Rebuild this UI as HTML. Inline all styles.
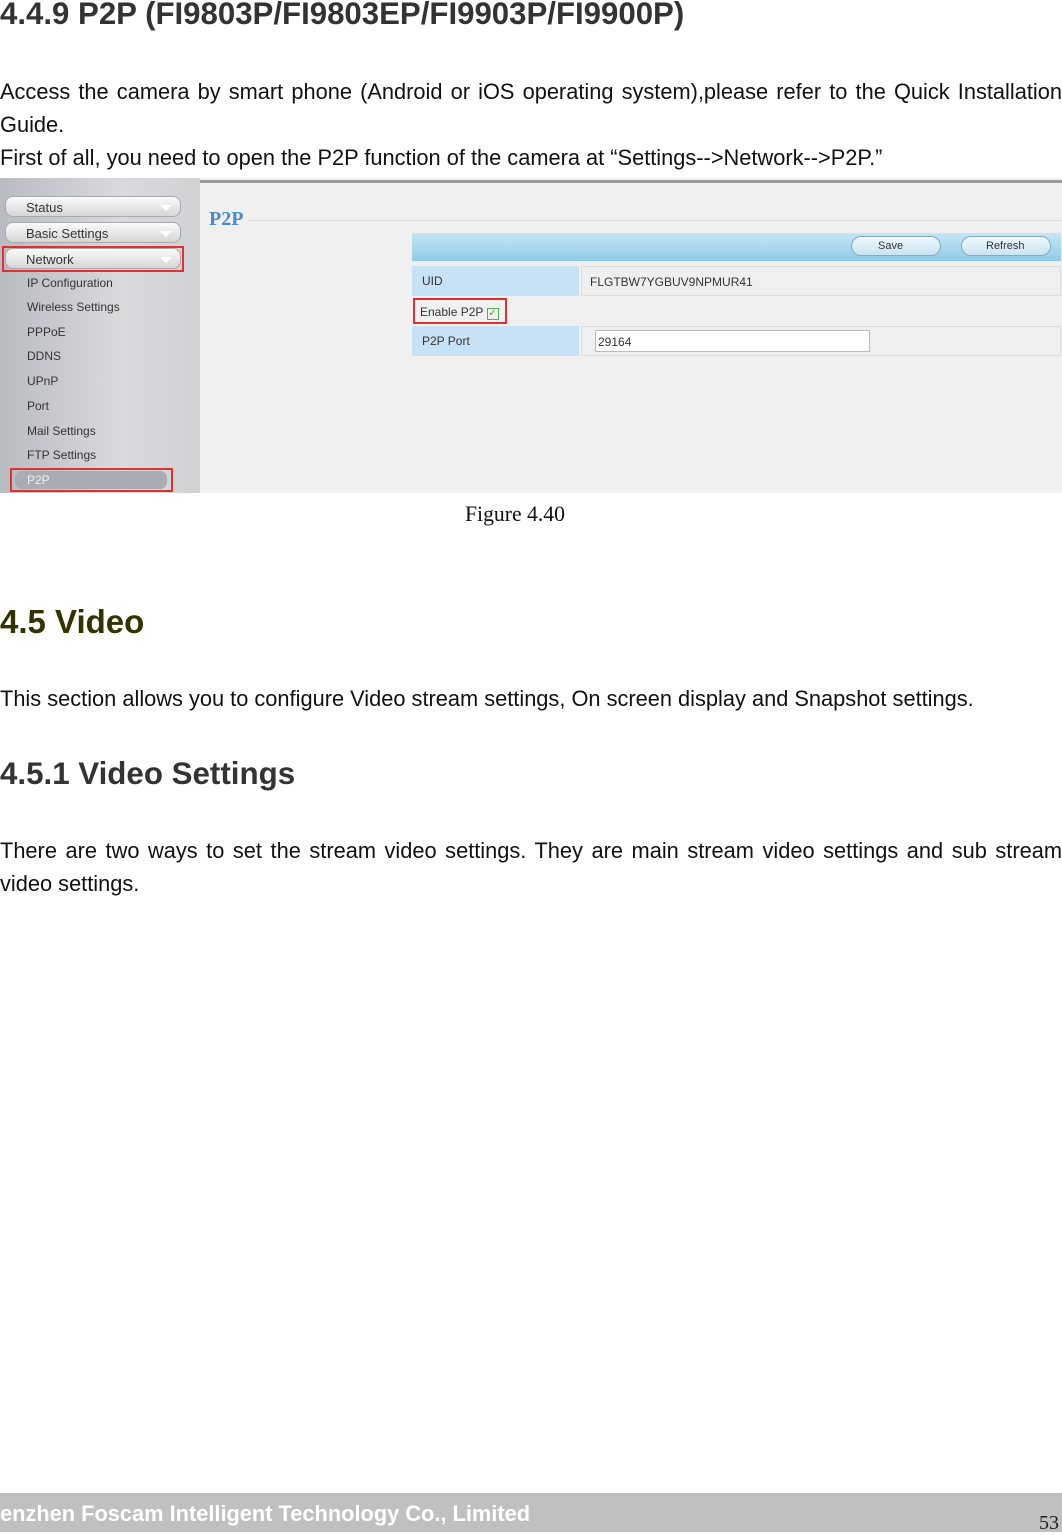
<!DOCTYPE html>
<html><head><meta charset="utf-8"><style>
*{margin:0;padding:0;box-sizing:border-box}
body{width:1062px;height:1532px;position:relative;background:#fff;font-family:"Liberation Sans",sans-serif;color:#111;overflow:hidden}
.a{position:absolute;white-space:nowrap}
.fig{position:absolute;left:0;top:178px;width:1062px;height:315px;background:#f0f0f0;overflow:hidden}
.side{position:absolute;left:0;top:0;width:200px;height:315px;background:linear-gradient(90deg,#b8bbc0,#d8dadd 60%,#cfd1d4)}
.btn{position:absolute;left:5px;width:176px;height:21px;border-radius:8px;background:linear-gradient(#fafafa,#d6d6d6);border:1px solid #aaa;font-size:13px;color:#333;padding:3px 0 0 20px}
.btn:after{content:"";position:absolute;right:8px;top:8px;border:6px solid transparent;border-top:6px solid #fff}
.it{position:absolute;left:27px;font-size:12px;color:#333}
.red{position:absolute;border:2px solid #e03030}
.row{position:absolute;left:412px;width:649px;height:30px}
.lab{position:absolute;left:0;top:0;width:167px;height:100%;background:#c6e2f4;font-size:12px;color:#333;padding:8px 0 0 10px}
.val{position:absolute;left:169px;top:0;right:0;height:100%;background:#efefef;border:1px solid #ddd;font-size:12px;color:#333;padding:8px 0 0 8px}
</style></head><body>

<div class="a" style="left:0;top:-4px;font-size:31.2px;font-weight:bold;color:#333">4.4.9 P2P (FI9803P/FI9803EP/FI9903P/FI9900P)</div>
<div class="a" style="left:0;top:79px;width:1062px;font-size:21.8px;white-space:normal;text-align:justify;text-align-last:justify;height:30px;overflow:hidden">Access the camera by smart phone (Android or iOS operating system),please refer to the Quick Installation</div>
<div class="a" style="left:0;top:112px;font-size:21.8px">Guide.</div>
<div class="a" style="left:0;top:145px;font-size:21.8px">First of all, you need to open the P2P function of the camera at “Settings-->Network-->P2P.”</div>

<div class="fig">
 <div class="side">
  <div class="btn" style="top:18px">Status</div>
  <div class="btn" style="top:44px">Basic Settings</div>
  <div class="btn" style="top:70px">Network</div>
  <div class="red" style="left:2px;top:68px;width:182px;height:26px"></div>
  <div class="it" style="top:98px">IP Configuration</div>
  <div class="it" style="top:122px">Wireless Settings</div>
  <div class="it" style="top:147px">PPPoE</div>
  <div class="it" style="top:171px">DDNS</div>
  <div class="it" style="top:196px">UPnP</div>
  <div class="it" style="top:221px">Port</div>
  <div class="it" style="top:246px">Mail Settings</div>
  <div class="it" style="top:270px">FTP Settings</div>
  <div style="position:absolute;left:15px;top:293px;width:152px;height:18px;border-radius:7px;background:#a9adb3;color:#eee;font-size:12px;padding:2px 0 0 12px">P2P</div>
  <div class="red" style="left:10px;top:290px;width:163px;height:24px"></div>
 </div>
 <div style="position:absolute;left:200px;top:2px;right:0;height:3px;background:#999"></div>
 <div class="a" style="left:209px;top:30px;font-family:'Liberation Serif',serif;font-weight:bold;font-size:20px;color:#4a8cc8">P2P</div>
 <div style="position:absolute;left:248px;top:42px;right:0;height:1px;background:#ddd"></div>
 <div style="position:absolute;left:412px;top:55px;width:649px;height:28px;background:linear-gradient(#c6e6f6,#8fcbe6)"></div>
 <div style="position:absolute;left:851px;top:58px;width:90px;height:20px;border-radius:10px;border:1px solid #8ab;background:linear-gradient(#eef8fd,#c8e4f2);font-size:11px;color:#333;padding:3px 0 0 26px">Save</div>
 <div style="position:absolute;left:961px;top:58px;width:90px;height:20px;border-radius:10px;border:1px solid #8ab;background:linear-gradient(#eef8fd,#c8e4f2);font-size:11px;color:#333;padding:3px 0 0 24px">Refresh</div>
 <div class="row" style="top:88px"><div class="lab">UID</div><div class="val">FLGTBW7YGBUV9NPMUR41</div></div>
 <div class="a" style="left:420px;top:127px;font-size:12px;color:#333">Enable P2P <span style="display:inline-block;width:12px;height:12px;border:1px solid #5a5;font-size:10px;line-height:10px;color:#3a3;text-align:center">✓</span></div>
 <div class="red" style="left:413px;top:120px;width:94px;height:26px"></div>
 <div class="row" style="top:148px"><div class="lab">P2P Port</div><div class="val"><div style="position:absolute;left:13px;top:3px;width:275px;height:22px;background:#fff;border:1px solid #bbb;padding:4px 0 0 2px">29164</div></div></div>
</div>

<div class="a" style="left:465px;top:502px;font-family:'Liberation Serif',serif;font-size:21.7px">Figure 4.40</div>

<div class="a" style="left:0;top:603px;font-size:33px;font-weight:bold;color:#333300">4.5 Video</div>
<div class="a" style="left:0;top:686px;font-size:21.8px">This section allows you to configure Video stream settings, On screen display and Snapshot settings.</div>
<div class="a" style="left:0;top:756px;font-size:31.3px;font-weight:bold;color:#333">4.5.1 Video Settings</div>
<div class="a" style="left:0;top:838px;width:1062px;font-size:21.8px;white-space:normal;text-align:justify;text-align-last:justify;height:30px;overflow:hidden">There are two ways to set the stream video settings. They are main stream video settings and sub stream</div>
<div class="a" style="left:0;top:871px;font-size:21.8px">video settings.</div>

<div style="position:absolute;left:0;top:1493px;width:1062px;height:39px;background:#c0c0c0"></div>
<div class="a" style="left:0;top:1501px;font-size:21.8px;font-weight:bold;color:#fff">enzhen Foscam Intelligent Technology Co., Limited</div>
<div class="a" style="left:1039px;top:1512px;font-family:'Liberation Serif',serif;font-size:20px;color:#222">53</div>
</body></html>
